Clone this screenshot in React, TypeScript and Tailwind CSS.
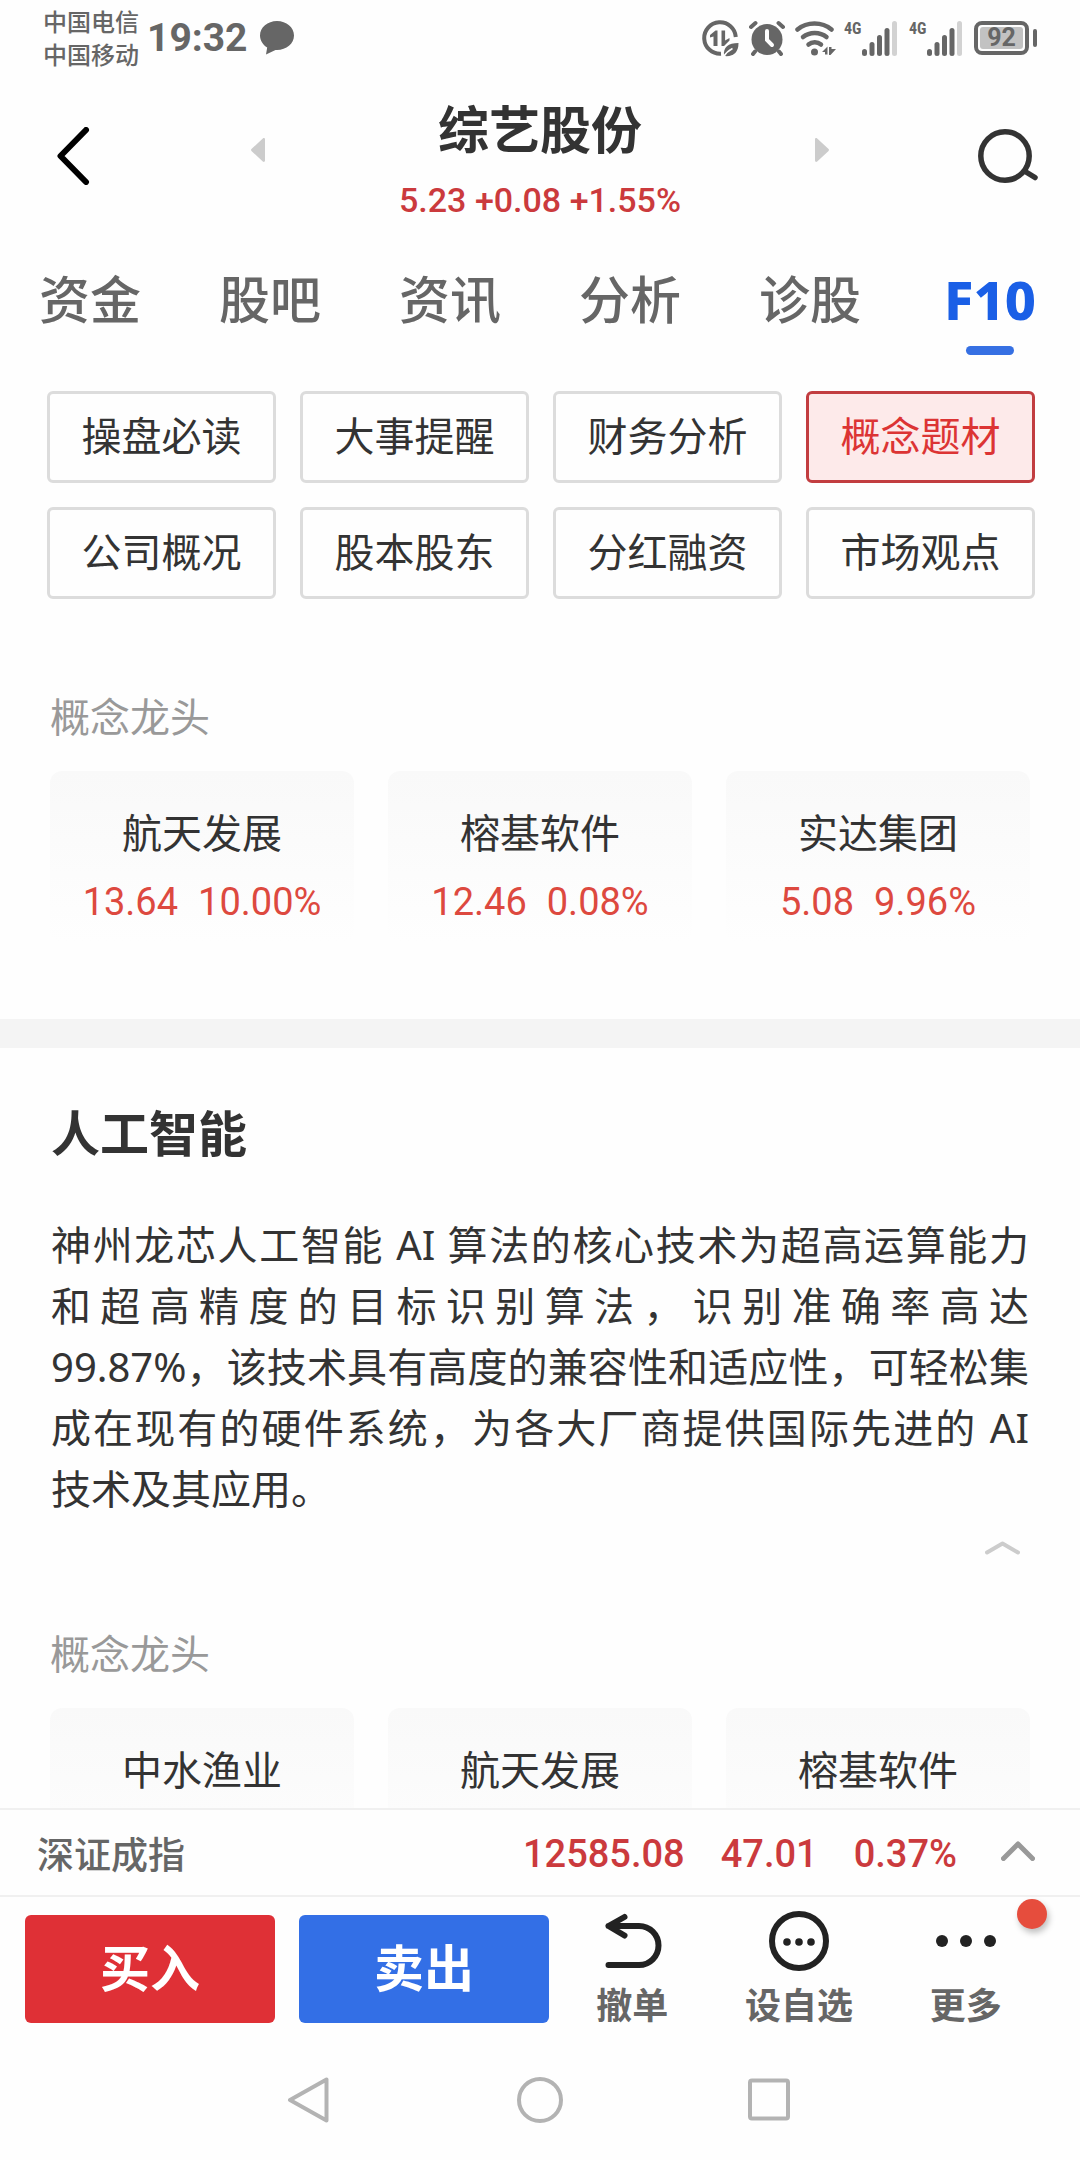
import React, { useState } from 'react';
import clsx from 'clsx';

const tabs = ['资金', '股吧', '资讯', '分析', '诊股', 'F10'];

const sections = [
  '操盘必读',
  '大事提醒',
  '财务分析',
  '概念题材',
  '公司概况',
  '股本股东',
  '分红融资',
  '市场观点',
];

type Stock = { name: string; price?: string; change?: string };

const leaders: Stock[] = [
  { name: '航天发展', price: '13.64', change: '10.00%' },
  { name: '榕基软件', price: '12.46', change: '0.08%' },
  { name: '实达集团', price: '5.08', change: '9.96%' },
];

const aiLeaders: Stock[] = [{ name: '中水渔业' }, { name: '航天发展' }, { name: '榕基软件' }];

const Signal: React.FC = () => (
  <div className="flex">
    <span className="w-[18px] font-['Roboto_Condensed',Roboto,sans-serif] text-[16px] leading-4 font-bold">4G</span>
    <svg width="35" height="35" viewBox="0 0 35 35" fill="#666">
      <rect x="0" y="28" width="5" height="7" rx="2.5" />
      <rect x="7.5" y="21" width="5" height="14" rx="2.5" />
      <rect x="15" y="14" width="5" height="21" rx="2.5" />
      <rect x="22.5" y="7" width="5" height="28" rx="2.5" />
      <rect x="30" y="0" width="5" height="35" rx="2.5" fill="#d2d2d2" />
    </svg>
  </div>
);

const StatusBar: React.FC = () => (
  <div className="flex h-[76px] items-center px-[43px] text-[#666]">
    <div className="text-[24px] leading-[33px] font-medium">
      <div>中国电信</div>
      <div>中国移动</div>
    </div>
    <span className="ml-2 font-[Roboto,sans-serif] text-[39px] leading-[50px] font-bold">19:32</span>
    <svg className="ml-3" width="34" height="34" viewBox="0 0 34 34" fill="#666">
      <path d="M17 0C7.6 0 0 6.4 0 14.5c0 5 2.8 9.300 7.200 12L6 33.500l9.500-4.600c.5.1 1 .1 1.500.1 9.400 0 17-6.400 17-14.500S26.400 0 17 0z" />
    </svg>
    <div className="ml-auto flex items-center gap-2">
      <div className="flex items-center gap-[10px]">
        <svg width="37" height="37" viewBox="0 0 37 37" fill="none" stroke="#666">
          <path d="M19 33.800A15.800 15.800 0 1 1 33.800 17" strokeWidth="4" />
          <path d="M8 17.500v-2.500l5.500-4.500h2V26h-4v-9.500z" fill="#666" stroke="none" />
          <path d="M19.500 10.500h3.600v10l4.400-2.500v2.500l-5.500 5.500h-2.500z" fill="#666" stroke="none" />
          <path d="M22 36c-1-9 4-13 14.500-13 0 10-5.500 14-14.500 13z" fill="#666" stroke="none" />
          <path d="M21.500 37c2-3.500 5-6.500 9-8.500" stroke="#fefefe" strokeWidth="1.600" />
        </svg>
        <svg width="36" height="36" viewBox="0 0 36 36" fill="none" stroke="#666" strokeLinecap="round">
          <circle cx="18" cy="19.500" r="15.500" fill="#666" stroke="none" />
          <path d="M2 7L6.500 3M34 7L29.500 3M6 31.500l-2 2.500M30 31.500l2 2.500" strokeWidth="4" />
          <path d="M18 11v9l5 5" stroke="#fefefe" strokeWidth="4" />
        </svg>
        <svg width="41" height="35" viewBox="0 0 41 35" fill="none" stroke="#666" strokeWidth="4.500" strokeLinecap="round">
          <path d="M2.500 8.500c9.500-8 24.500-8 34 0" />
          <path d="M8 16c6.500-5.500 17-5.500 23.500 0" />
          <path d="M13.500 23.500c3.500-3 9-3 12.500 0" />
          <circle cx="19.500" cy="31" r="3.500" fill="#666" stroke="none" />
          <path d="M27 31l5.500-5.500v8h-2.500v-2.500zM34 26h2.500v2h4.500l-5.500 6H34z" fill="#666" stroke="none" />
        </svg>
      </div>
      <div className="flex items-center gap-3">
        <Signal />
        <Signal />
        <div className="flex items-center gap-1">
          <div className="h-[34px] w-[55px] rounded-lg border-4 border-[#666] p-[2px]">
            <div className="h-full rounded-[3px] bg-[#c2c2c2] text-center font-[Roboto,sans-serif] text-[25px] leading-[22px] font-bold">
              92
            </div>
          </div>
          <div className="h-[18px] w-1 rounded-full bg-[#666]" />
        </div>
      </div>
    </div>
  </div>
);

const Header: React.FC = () => (
  <header className="grid h-40 grid-cols-[1fr_2.3fr_1fr] items-center">
    <button type="button" aria-label="返回" className="pl-[57px]">
      <svg width="33" height="58" viewBox="0 0 33 58" fill="none" stroke="#000" strokeWidth="6" strokeLinecap="round" strokeLinejoin="round">
        <path d="M29 3L3.500 29 29 55" />
      </svg>
    </button>
    <div className="flex items-center justify-between">
      <button type="button" aria-label="上一只" className="pb-3">
        <svg width="14" height="24" viewBox="0 0 14 24" fill="#ccc">
          <path d="M14 1.500v21c0 1.300-1.200 1.800-2.200 1L.7 13.200a1.600 1.600 0 0 1 0-2.400L11.800.5c1-.8 2.200-.3 2.200 1z" />
        </svg>
      </button>
      <div className="pt-[18px] text-center">
        <h1 className="text-[51px] leading-[70px] font-bold">综艺股份</h1>
        <p className="font-[Roboto,sans-serif] text-[34px] leading-[72px] font-medium text-[#cb3a3d]">
          5.23 +0.08 +1.55%
        </p>
      </div>
      <button type="button" aria-label="下一只" className="pb-3">
        <svg width="14" height="24" viewBox="0 0 14 24" fill="#ccc">
          <path d="M0 1.500v21c0 1.300 1.200 1.800 2.200 1l11.100-10.300a1.600 1.600 0 0 0 0-2.400L2.200.5C1.200-.3 0 .2 0 1.500z" />
        </svg>
      </button>
    </div>
    <button type="button" aria-label="搜索" className="justify-self-end pr-[42px]">
      <svg width="60" height="56" viewBox="0 0 60 56" fill="none" stroke="#333" strokeWidth="5.500" strokeLinecap="round">
        <circle cx="27" cy="28" r="24.200" />
        <path d="M48 44l9 5.500" />
      </svg>
    </button>
  </header>
);

const Leaders: React.FC<{ stocks: Stock[] }> = ({ stocks }) => (
  <div className="px-[50px]">
    <h3 className="text-[40px] leading-10 text-[#999]">概念龙头</h3>
    <div className="mt-[34px] grid grid-cols-3 gap-[34px]">
      {stocks.map((stock) => (
        <a
          key={stock.name}
          href="#"
          className="min-h-[172px] rounded-xl bg-linear-to-b from-[#f9f9f9] to-[#fefefe] pt-[38px] text-center"
        >
          <div className="text-[40px] leading-[48px]">{stock.name}</div>
          {stock.price && (
            <div className="mt-5 flex justify-center gap-5 font-[Roboto,sans-serif] text-[38px] leading-[50px] text-[#dd493f]">
              <span>{stock.price}</span>
              <span>{stock.change}</span>
            </div>
          )}
        </a>
      ))}
    </div>
  </div>
);

const BottomBar: React.FC = () => (
  <footer className="shrink-0 bg-[#fefefe]">
    <div className="flex h-[87px] items-center border-t-2 border-[#f0f0f0] pt-1 pr-[45px] pl-[37px]">
      <span className="text-[37px] font-medium text-[#666]">深证成指</span>
      <div className="ml-auto flex gap-9 font-[Roboto,sans-serif] text-[38px] font-medium text-[#cb3a3d]">
        <span>12585.08</span>
        <span>47.01</span>
        <span>0.37%</span>
      </div>
      <button type="button" aria-label="展开指数" className="ml-11 pb-2">
        <svg width="34" height="20" viewBox="0 0 34 20" fill="none" stroke="#999" strokeWidth="5" strokeLinecap="round" strokeLinejoin="round">
          <path d="M2.500 17.500L17 3l14.500 14.500" />
        </svg>
      </button>
    </div>
    <div className="flex items-center border-t-2 border-[#f0f0f0] pt-[14px] pr-[31px] pl-[25px] text-[#666]">
      <button type="button" className="mr-6 h-[108px] flex-3 rounded-md bg-[#df3036] text-[50px] font-bold text-white">
        买入
      </button>
      <button type="button" className="h-[108px] flex-3 rounded-md bg-[#336fe6] text-[50px] font-bold text-white">
        卖出
      </button>
      <button type="button" className="flex flex-2 flex-col items-center">
        <svg width="60" height="60" viewBox="0 0 60 60" fill="none" stroke="#222" strokeWidth="6" strokeLinecap="round" strokeLinejoin="round">
          <path d="M22.500 6L6.500 15l16 9.500M6.500 15H37a19.500 19.500 0 0 1 0 39H6.500" />
        </svg>
        <span className="mt-[15px] text-[36px] leading-10 font-bold">撤单</span>
      </button>
      <button type="button" className="flex flex-2 flex-col items-center">
        <svg width="60" height="60" viewBox="0 0 60 60" fill="#222">
          <circle cx="30" cy="30" r="27" fill="none" stroke="#222" strokeWidth="6" />
          <circle cx="18" cy="31" r="3.800" />
          <circle cx="30" cy="31" r="3.800" />
          <circle cx="42" cy="31" r="3.800" />
        </svg>
        <span className="mt-[15px] text-[36px] leading-10 font-bold">设自选</span>
      </button>
      <button type="button" className="relative flex flex-2 flex-col items-center">
        <svg width="60" height="60" viewBox="0 0 60 60" fill="#222">
          <circle cx="6" cy="30" r="6" />
          <circle cx="30" cy="30" r="6" />
          <circle cx="54" cy="30" r="6" />
        </svg>
        <span className="mt-[15px] text-[36px] leading-10 font-bold">更多</span>
        <i className="absolute -top-3 right-[2px] size-[30px] rounded-full bg-[#e64d3d] shadow-[2px_4px_6px_rgba(0,0,0,0.25)]" />
      </button>
    </div>
    <nav className="flex justify-center gap-[184px] pt-[51px] pb-[37px]">
      <button type="button" aria-label="后退">
        <svg width="46" height="46" viewBox="0 0 46 46" fill="none" stroke="#b3b3b3" strokeWidth="4" strokeLinejoin="round">
          <path d="M39.500 2.500v41L3 23z" />
        </svg>
      </button>
      <button type="button" aria-label="主页">
        <svg width="46" height="46" viewBox="0 0 46 46" fill="none" stroke="#b3b3b3" strokeWidth="4">
          <circle cx="23" cy="23" r="21" />
        </svg>
      </button>
      <button type="button" aria-label="最近任务">
        <svg width="46" height="46" viewBox="0 0 46 46" fill="none" stroke="#b3b3b3" strokeWidth="4">
          <rect x="3" y="3.500" width="38" height="38" rx="2" />
        </svg>
      </button>
    </nav>
  </footer>
);

const App: React.FC = () => {
  const [tab, setTab] = useState('F10');
  const [section, setSection] = useState('概念题材');
  const [expanded, setExpanded] = useState(true);

  return (
    <div
      lang="zh-CN"
      className="flex h-screen flex-col bg-[#fefefe] font-['Noto_Sans','Noto_Sans_CJK_SC',sans-serif] text-[#333]"
    >
      <StatusBar />
      <Header />
      <nav className="grid grid-cols-6 items-start pt-[33px]">
        {tabs.map((name) => (
          <button
            key={name}
            type="button"
            onClick={() => setTab(name)}
            className={clsx(
              'flex flex-col items-center leading-[60px]',
              tab === name ? 'text-[54px] font-extrabold text-[#1a5fe6]' : 'text-[51px] font-medium text-[#666]'
            )}
          >
            {name}
            {tab === name && <span className="mt-[17px] h-[9px] w-12 rounded-full bg-[#3670e3]" />}
          </button>
        ))}
      </nav>
      <main className="min-h-0 flex-1 overflow-y-auto [scrollbar-width:none]">
        <div className="grid grid-cols-4 gap-6 pt-9 pr-[45px] pl-[47px]">
          {sections.map((name) => (
            <button
              key={name}
              type="button"
              onClick={() => setSection(name)}
              className={clsx(
                'h-[92px] rounded-md border-3 pb-[2px] text-[40px]',
                section === name ? 'border-[#c23d40] bg-[#fdeaea] text-[#dc3434]' : 'border-[#dcdcdc]'
              )}
            >
              {name}
            </button>
          ))}
        </div>
        <section className="pt-[98px] pb-[76px]">
          <Leaders stocks={leaders} />
        </section>
        <section className="border-t-[29px] border-[#f4f4f4] pt-[55px]">
          <div className="px-[51px]">
            <h2 className="text-[49px] leading-[60px] font-bold">人工智能</h2>
            {expanded && (
              <p className="mt-[51px] text-justify text-[40px] leading-[61px]">
                神州龙芯人工智能 AI 算法的核心技术为超高运算能力和超高精度的目标识别算法，识别准确率高达 99.87%，该技术具有高度的兼容性和适应性，可轻松集成在现有的硬件系统，为各大厂商提供国际先进的 AI 技术及其应用。
              </p>
            )}
            <button
              type="button"
              aria-label="收起"
              onClick={() => setExpanded(!expanded)}
              className="mt-[22px] mr-[9px] mb-[79px] ml-auto block"
            >
              <svg width="35" height="14" viewBox="0 0 35 14" fill="none" stroke="#ccc" strokeWidth="4" strokeLinecap="round" strokeLinejoin="round">
                <path d="M2 11.500L17.500 2.500 33 11.500" />
              </svg>
            </button>
          </div>
          <Leaders stocks={aiLeaders} />
        </section>
      </main>
      <BottomBar />
    </div>
  );
};

export default App;
